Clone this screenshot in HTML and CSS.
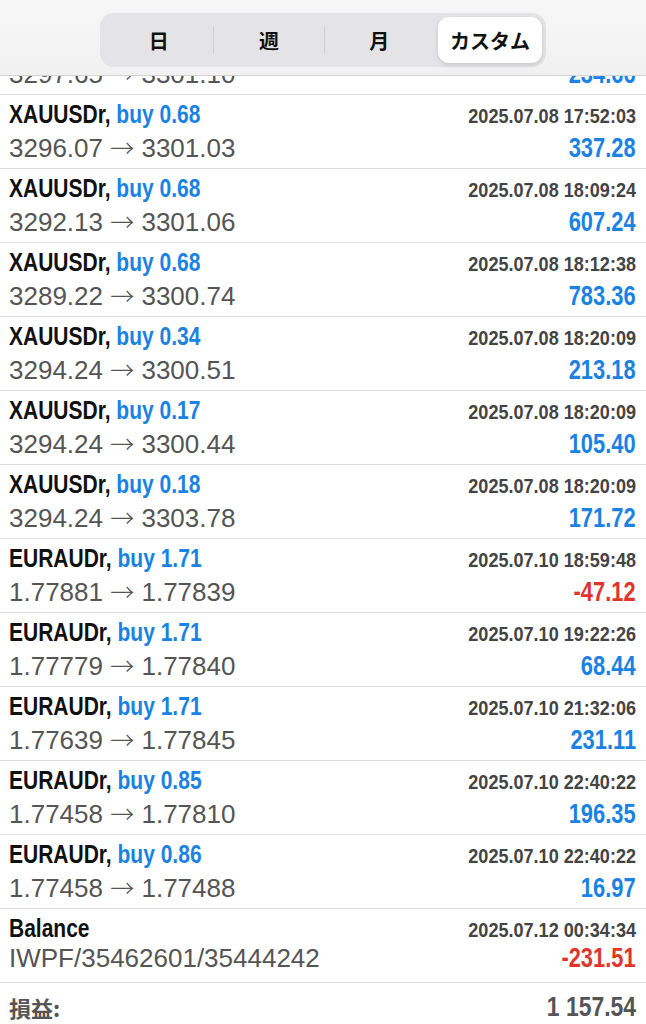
FILE: index.html
```html
<!DOCTYPE html>
<html lang="ja">
<head>
    <meta charset="UTF-8">
    <meta name="viewport" content="width=device-width, initial-scale=1.0">
    <title>履歴</title>
    <link rel="stylesheet" href="styles.css">
</head>
<body>
    <!-- Period switcher sits over the scrolled list -->
    <div class="header">
        <div class="segments">
            <div class="segment">日</div>
            <div class="divider"></div>
            <div class="segment">週</div>
            <div class="divider"></div>
            <div class="segment">月</div>
            <div class="segment active">カスタム</div>
        </div>
    </div>

    <div class="deals">
        <!-- row scrolled up under the header, only its lower line shows -->
        <div class="deal cut">
            <div class="line">
                <span class="prices">3297.65 <span class="arrow">→</span> 3301.10</span>
                <span class="profit">234.66</span>
            </div>
        </div>
        <div class="deal">
            <div class="line">
                <span class="symbol">XAUUSDr, <span class="side">buy 0.68</span></span>
                <span class="time">2025.07.08 17:52:03</span>
            </div>
            <div class="line">
                <span class="prices">3296.07 <span class="arrow">→</span> 3301.03</span>
                <span class="profit">337.28</span>
            </div>
        </div>
        <div class="deal">
            <div class="line">
                <span class="symbol">XAUUSDr, <span class="side">buy 0.68</span></span>
                <span class="time">2025.07.08 18:09:24</span>
            </div>
            <div class="line">
                <span class="prices">3292.13 <span class="arrow">→</span> 3301.06</span>
                <span class="profit">607.24</span>
            </div>
        </div>
        <div class="deal">
            <div class="line">
                <span class="symbol">XAUUSDr, <span class="side">buy 0.68</span></span>
                <span class="time">2025.07.08 18:12:38</span>
            </div>
            <div class="line">
                <span class="prices">3289.22 <span class="arrow">→</span> 3300.74</span>
                <span class="profit">783.36</span>
            </div>
        </div>
        <div class="deal">
            <div class="line">
                <span class="symbol">XAUUSDr, <span class="side">buy 0.34</span></span>
                <span class="time">2025.07.08 18:20:09</span>
            </div>
            <div class="line">
                <span class="prices">3294.24 <span class="arrow">→</span> 3300.51</span>
                <span class="profit">213.18</span>
            </div>
        </div>
        <div class="deal">
            <div class="line">
                <span class="symbol">XAUUSDr, <span class="side">buy 0.17</span></span>
                <span class="time">2025.07.08 18:20:09</span>
            </div>
            <div class="line">
                <span class="prices">3294.24 <span class="arrow">→</span> 3300.44</span>
                <span class="profit">105.40</span>
            </div>
        </div>
        <div class="deal">
            <div class="line">
                <span class="symbol">XAUUSDr, <span class="side">buy 0.18</span></span>
                <span class="time">2025.07.08 18:20:09</span>
            </div>
            <div class="line">
                <span class="prices">3294.24 <span class="arrow">→</span> 3303.78</span>
                <span class="profit">171.72</span>
            </div>
        </div>
        <div class="deal">
            <div class="line">
                <span class="symbol">EURAUDr, <span class="side">buy 1.71</span></span>
                <span class="time">2025.07.10 18:59:48</span>
            </div>
            <div class="line">
                <span class="prices">1.77881 <span class="arrow">→</span> 1.77839</span>
                <span class="profit loss">-47.12</span>
            </div>
        </div>
        <div class="deal">
            <div class="line">
                <span class="symbol">EURAUDr, <span class="side">buy 1.71</span></span>
                <span class="time">2025.07.10 19:22:26</span>
            </div>
            <div class="line">
                <span class="prices">1.77779 <span class="arrow">→</span> 1.77840</span>
                <span class="profit">68.44</span>
            </div>
        </div>
        <div class="deal">
            <div class="line">
                <span class="symbol">EURAUDr, <span class="side">buy 1.71</span></span>
                <span class="time">2025.07.10 21:32:06</span>
            </div>
            <div class="line">
                <span class="prices">1.77639 <span class="arrow">→</span> 1.77845</span>
                <span class="profit">231.11</span>
            </div>
        </div>
        <div class="deal">
            <div class="line">
                <span class="symbol">EURAUDr, <span class="side">buy 0.85</span></span>
                <span class="time">2025.07.10 22:40:22</span>
            </div>
            <div class="line">
                <span class="prices">1.77458 <span class="arrow">→</span> 1.77810</span>
                <span class="profit">196.35</span>
            </div>
        </div>
        <div class="deal">
            <div class="line">
                <span class="symbol">EURAUDr, <span class="side">buy 0.86</span></span>
                <span class="time">2025.07.10 22:40:22</span>
            </div>
            <div class="line">
                <span class="prices">1.77458 <span class="arrow">→</span> 1.77488</span>
                <span class="profit">16.97</span>
            </div>
        </div>
        <div class="deal">
            <div class="line">
                <span class="symbol">Balance</span>
                <span class="time">2025.07.12 00:34:34</span>
            </div>
            <div class="line">
                <span class="prices">IWPF/35462601/35444242</span>
                <span class="profit loss">-231.51</span>
            </div>
        </div>
    </div>

    <div class="total">
        <span class="total-label">損益:</span>
        <span class="total-value">1 157.54</span>
    </div>
</body>
</html>
```

FILE: styles.css
```css
/* Basic Setup */
body {
    margin: 0;
    padding: 0;
    background-color: #ffffff;
    font-family: 'Liberation Sans', Arial, sans-serif;
    color: #111;
    overflow: hidden;
    position: relative;
}

/* Header with period switcher */
.header {
    position: absolute;
    top: 0;
    left: 0;
    right: 0;
    height: 76px;
    background: linear-gradient(#f7f7f7, #f1f1f1);
    border-bottom: 1px solid #d4d4d4;
    box-sizing: border-box;
    display: flex;
    justify-content: center;
    padding-top: 13px;
    z-index: 2;
}

.segments {
    width: 446px;
    height: 54px;
    box-sizing: border-box;
    background-color: #e4e4e6;
    border-radius: 14px;
    display: flex;
    align-items: center;
    padding: 4px;
}

.segment {
    flex: 1;
    height: 100%;
    display: flex;
    align-items: center;
    justify-content: center;
    font-family: 'Noto Sans CJK JP', sans-serif;
    font-weight: 700;
    font-size: 20px;
    color: #111;
}

.segment.active {
    flex: 0 0 104px;
    margin-left: 4px;
    background-color: #fff;
    border-radius: 11px;
    box-shadow: 0 2px 5px rgba(0, 0, 0, 0.12);
}

.divider {
    width: 1px;
    height: 28px;
    background-color: #cfcfd2;
}

/* Deal list */
.deals {
    padding-top: 55px;
}

.deal {
    height: 74px;
    border-bottom: 1px solid #dedede;
    box-sizing: border-box;
    padding: 5px 10px 0 9px;
}

.deal.cut {
    height: 40px;
    padding-top: 0;
}

.line {
    display: flex;
    justify-content: space-between;
    align-items: baseline;
    height: 34px;
}

.deal .line:first-child {
    height: 29px;
}

.deal.cut .line:first-child {
    height: 34px;
}

/* bold condensed look: no narrow face is installed, so squeeze Liberation Sans */
.symbol,
.time,
.profit,
.total-value {
    display: inline-block;
    font-weight: 700;
    transform: scaleX(0.81);
}

.symbol {
    font-size: 25px;
    color: #111;
    transform: scaleX(0.84);
    transform-origin: left center;
}

.side {
    color: #1a82e2;
}

.time {
    font-size: 21px;
    color: #444;
    transform: scaleX(0.86);
    transform-origin: right center;
}

.prices {
    font-size: 26px;
    color: #555;
}

.arrow {
    font-family: 'Noto Sans CJK JP', sans-serif;
    font-weight: 300;
    font-size: 24px;
}

.profit {
    font-size: 27px;
    color: #1a82e2;
    transform-origin: right center;
}

.profit.loss {
    color: #e0352b;
}

/* Summary row */
.total {
    display: flex;
    justify-content: space-between;
    align-items: flex-end;
    height: 41px;
    box-sizing: border-box;
    padding: 0 10px 5px 9px;
    line-height: 24px;
}

.total-label {
    font-family: 'Noto Sans CJK JP', sans-serif;
    font-weight: 700;
    font-size: 22px;
    color: #555;
}

.total-value {
    font-size: 27px;
    color: #555;
    transform: scaleX(0.85);
    transform-origin: right center;
}
```
